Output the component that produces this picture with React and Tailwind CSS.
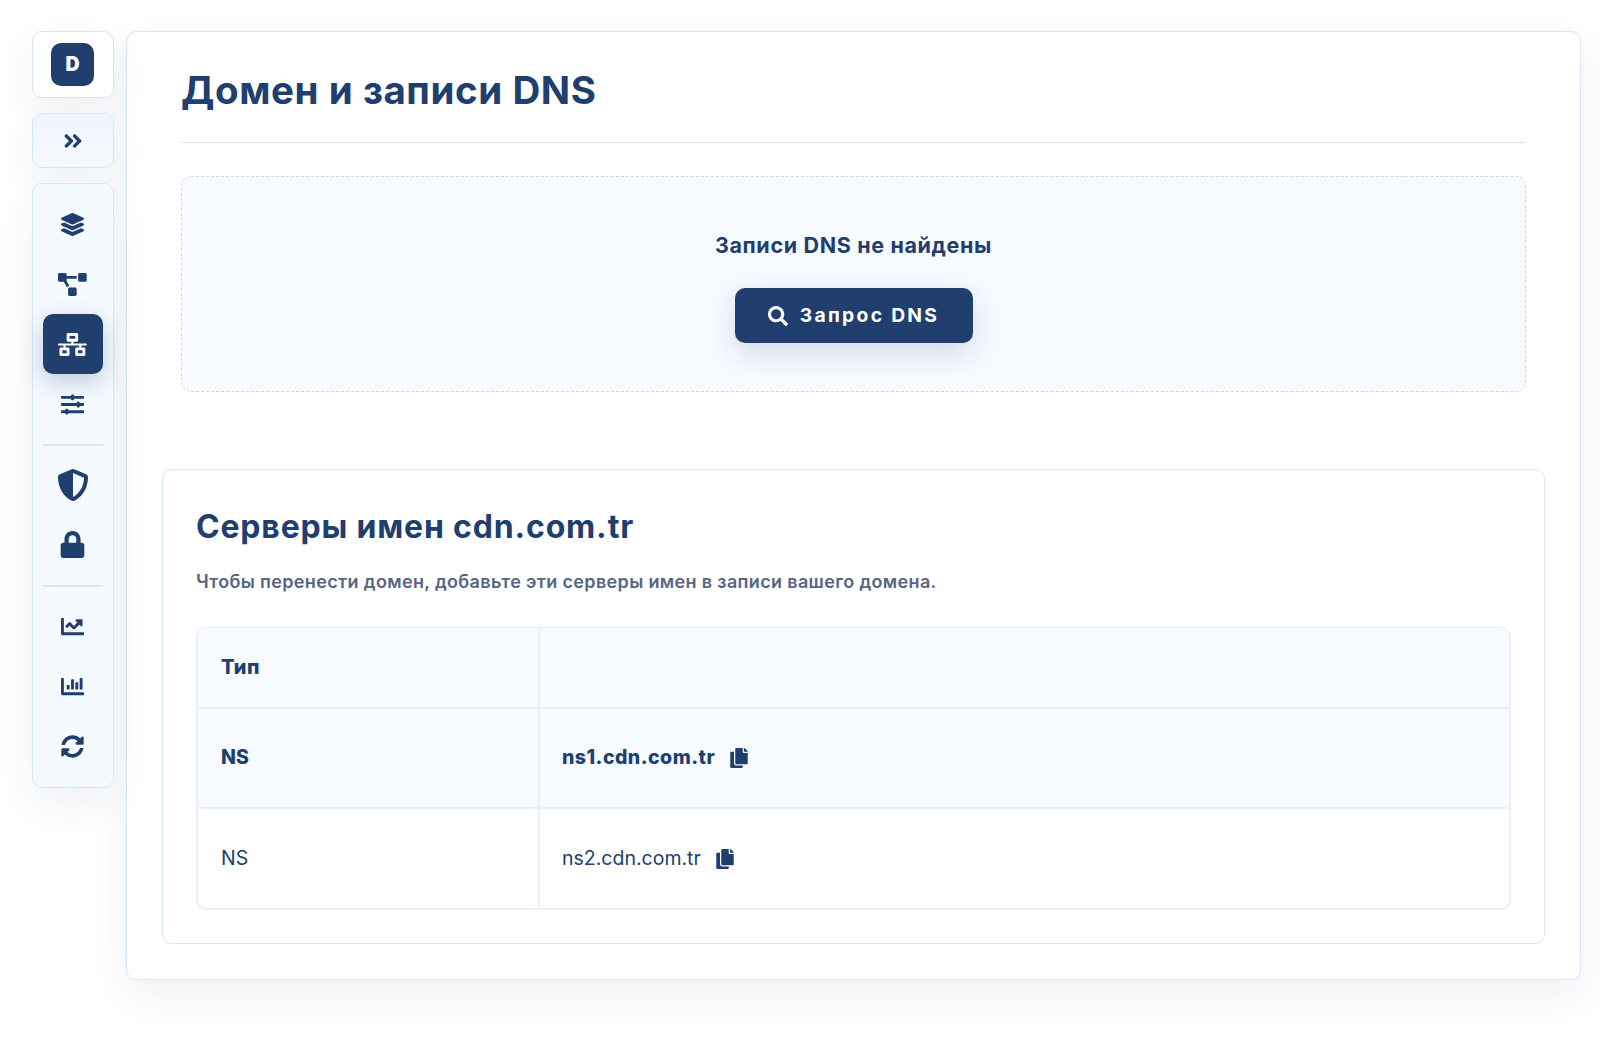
import React from "react";
import {
  FaLayerGroup,
  FaProjectDiagram,
  FaNetworkWired,
  FaSlidersH,
  FaShieldAlt,
  FaLock,
  FaChartLine,
  FaChartBar,
  FaSyncAlt,
  FaSearch,
  FaCopy,
  FaAngleDoubleRight,
} from "react-icons/fa";

const card = "rounded-[10px] border border-[#d6e7f8] shadow-[0_15px_40px_rgba(31,45,92,0.07)]";

function NavItem({ icon: Icon, size = "h-[23px] w-[23px]", active }) {
  return (
    <a
      className={`flex h-[60px] w-[60px] items-center justify-center rounded-[10px] ${
        active ? "bg-[#213f6e] text-white shadow-[0_8px_25px_rgba(33,62,110,0.25)]" : ""
      }`}
    >
      <Icon className={`${size} shrink-0`} />
    </a>
  );
}

function Divider() {
  return <div className="mb-[9.5px] mt-[10px] h-[1.5px] w-[60px] bg-[#dbe7f6]" />;
}

function Row({ type, host, bold }) {
  return (
    <div
      className={`grid grid-cols-[342px_1fr] border-t-2 border-[#e9f0f8] text-[19.5px] ${
        bold ? "h-[100px] bg-[#f7faff] font-extrabold" : "h-[101px]"
      }`}
    >
      <div className="flex items-center border-r-2 border-[#e9f0f8] pl-[23px]">{type}</div>
      <div className="flex items-center gap-[14px] pl-[22px]">
        <span className={bold ? "tracking-[0.46px]" : ""}>{host}</span>
        <FaCopy className="h-5 w-auto" />
      </div>
    </div>
  );
}

export default function App() {
  return (
    <div className="flex h-[1051px] w-[1600px] items-start overflow-hidden bg-white pl-[31.5px] pt-[31px] font-['Inter','Liberation_Sans',sans-serif] text-[#213f6e]">
      <aside className="relative z-10 flex w-[82px] shrink-0 flex-col gap-[15px]">
        <div className={`flex h-[67px] items-center justify-center bg-white ${card}`}>
          <div className="flex h-[43px] w-[43px] items-center justify-center rounded-[10px] bg-[#213f6e] text-[19.5px] font-black text-white">
            D
          </div>
        </div>
        <div className={`flex h-[55px] items-center justify-center bg-linear-to-b from-[#eff4fd] to-[#f5faff] ${card}`}>
          <FaAngleDoubleRight className="h-[22px] w-auto" />
        </div>
        <nav className={`flex h-[605px] flex-col items-center bg-[#f5faff] pt-[10px] ${card}`}>
          <NavItem icon={FaLayerGroup} />
          <NavItem icon={FaProjectDiagram} size="h-[23px] w-[28.75px]" />
          <NavItem icon={FaNetworkWired} size="h-[23px] w-[28.75px]" active />
          <NavItem icon={FaSlidersH} />
          <Divider />
          <NavItem icon={FaShieldAlt} size="h-8 w-8" />
          <NavItem icon={FaLock} size="mb-[2px] h-[27px] w-auto" />
          <Divider />
          <NavItem icon={FaChartLine} />
          <NavItem icon={FaChartBar} />
          <NavItem icon={FaSyncAlt} />
        </nav>
      </aside>

      <main className={`ml-[12.5px] h-[949px] w-[1455px] shrink-0 bg-white px-[35px] ${card}`}>
        <div className="px-[19px]">
          <h1 className="flex h-[111px] items-center border-b border-[#d6e7f8] pt-[6px] text-[38.5px] font-bold leading-none tracking-[0.56px]">
            Домен и записи DNS
          </h1>
          <section className="mt-[33px] flex h-[216px] flex-col items-center rounded-[10px] border border-dashed border-[#c6daf0] bg-[#f7faff] pt-[54px]">
            <p className="text-[21.5px] font-bold leading-[28px] tracking-[0.65px]">Записи DNS не найдены</p>
            <button className="mt-[29px] flex h-[55px] w-[238px] items-center justify-center gap-3 rounded-[10px] bg-[#213f6e] text-[19.3px] font-bold tracking-[2.3px] text-white shadow-[0_10px_30px_rgba(33,62,110,0.17)]">
              <FaSearch className="h-5 w-auto" />
              Запрос DNS
            </button>
          </section>
        </div>

        <section className="mt-[77px] h-[475px] rounded-[10px] border border-[#d9e8f8] px-[33px] pt-[39px]">
          <h2 className="text-[32px] font-bold leading-[36px] tracking-[0.82px]">Серверы имен cdn.com.tr</h2>
          <p className="mt-[25px] text-[18px] font-semibold leading-[24px] tracking-[0.35px] text-[#566583]">
            Чтобы перенести домен, добавьте эти серверы имен в записи вашего домена.
          </p>
          <div className="mt-[33px] h-[283px] overflow-hidden rounded-[10px] border-2 border-t border-[#e9f0f8]">
            <div className="grid h-[79px] grid-cols-[342px_1fr] bg-[#f7faff] text-[20px] font-extrabold">
              <div className="flex items-center border-r-2 border-[#e9f0f8] pb-[2px] pl-[23px] tracking-[0.4px]">Тип</div>
              <div />
            </div>
            <Row type="NS" host="ns1.cdn.com.tr" bold />
            <Row type="NS" host="ns2.cdn.com.tr" />
          </div>
        </section>
      </main>
    </div>
  );
}
